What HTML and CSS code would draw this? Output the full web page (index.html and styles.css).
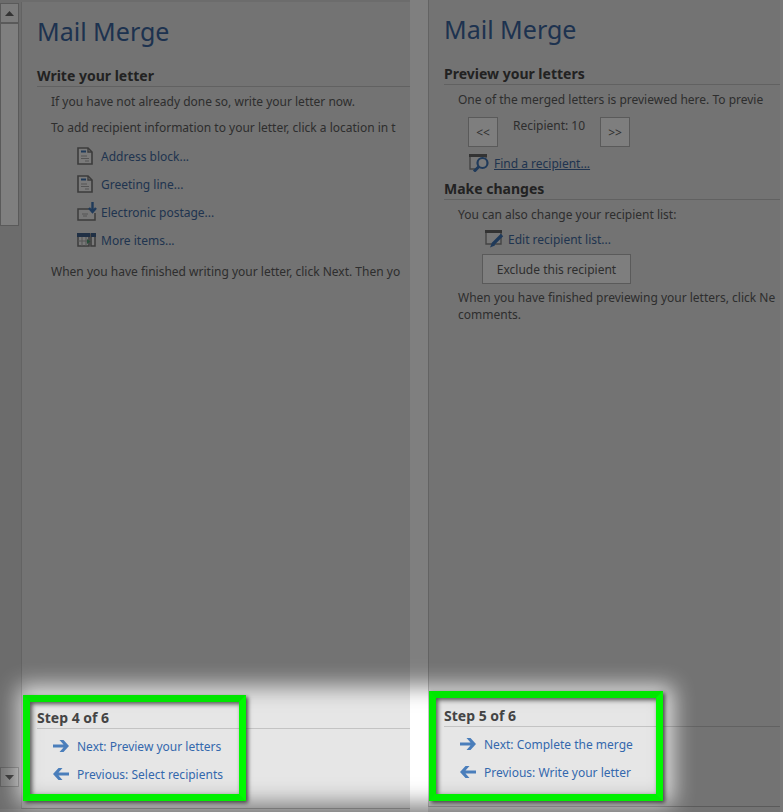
FILE: index.html
```html
<!DOCTYPE html>
<html lang="en">
<head>
<meta charset="utf-8">
<title>Mail Merge</title>
<link rel="stylesheet" href="styles.css">
</head>
<body>
<svg class="defs" width="0" height="0" aria-hidden="true">
  <symbol id="doc" viewBox="0 0 16 18">
    <path d="M1 1h10l4 4v12H1z" fill="#f4f4f4" stroke="#777" stroke-width="1.600"/>
    <path d="M11 1v4h4" fill="none" stroke="#777" stroke-width="1.400"/>
    <path d="M4 4.500h5" stroke="#3f74b5" stroke-width="2"/>
    <path d="M4 9h6M4 11.500h8M8 14h4" stroke="#aaa" stroke-width="1.200"/>
  </symbol>
  <symbol id="postage" viewBox="0 0 20 20">
    <path d="M12 7H1v11h17v-7" fill="#efefef" stroke="#777" stroke-width="1.500"/>
    <path d="M5 12h6M6 14h4" stroke="#aaa" stroke-width="1.200"/>
    <path d="M15.500 0v9M12 6l3.500 4L19 6" fill="none" stroke="#3f74b5" stroke-width="2.400"/>
  </symbol>
  <symbol id="items" viewBox="0 0 20 14">
    <path d="M1 1h11v12H1zM14 1h4v12h-4z" fill="#f0f0f0" stroke="#777" stroke-width="1.500"/>
    <path d="M0 0h13v4H0zM14 0h5v4h-5z" fill="#41618a"/>
    <path d="M1 8h11M5 4v9M9 4v9" stroke="#aaa"/>
    <path d="M10 6l3.500 2.500-3.500 2.500z" fill="#4f9b73"/>
  </symbol>
  <symbol id="find" viewBox="0 0 20 18">
    <path d="M7 15H1V2h16v2" fill="#efefef" stroke="#888" stroke-width="1.400"/>
    <path d="M0 0h18v3H0z" fill="#666"/>
    <circle cx="13.500" cy="9" r="5" fill="#f2f2f2" stroke="#3f74b5" stroke-width="2.200"/>
    <path d="M10 12.500l-5 5" stroke="#3f74b5" stroke-width="3"/>
  </symbol>
  <symbol id="edit" viewBox="0 0 20 18">
    <path d="M1 1h15v13H1z" fill="#efefef" stroke="#888" stroke-width="1.400"/>
    <path d="M0 0h17v3H0z" fill="#666"/>
    <path d="M17 5L8 14" stroke="#3f74b5" stroke-width="3.400"/>
    <path d="M7 12.500l3 3-5 2z" fill="#3f74b5"/>
  </symbol>
  <symbol id="arrow" viewBox="0 0 16 12">
    <path d="M0 4.500h10.500L6.500 0h4L16 6l-5.500 6h-4l4-4.500H0z" fill="#4a7ebb"/>
  </symbol>
</svg>

<main class="panes">
  <section class="pane pane-write">
    <div class="scrollbar">
      <button class="scroll-btn" type="button" aria-label="Scroll up"><svg width="9" height="5" viewBox="0 0 9 5"><path d="M0 5L4.500 0 9 5z"/></svg></button>
      <div class="thumb"></div>
      <button class="scroll-btn down" type="button" aria-label="Scroll down"><svg width="9" height="5" viewBox="0 0 9 5"><path d="M0 0h9L4.500 5z"/></svg></button>
    </div>
    <div class="content">
      <h1>Mail Merge</h1>
      <h2>Write your letter</h2>
      <p>If you have not already done so, write your letter now.</p>
      <p class="spaced">To add recipient information to your letter, click a location in t</p>
      <ul class="links">
        <li><svg class="icon-doc"><use href="#doc"/></svg><a href="#address">Address block...</a></li>
        <li><svg class="icon-doc"><use href="#doc"/></svg><a href="#greeting">Greeting line...</a></li>
        <li><svg class="icon-postage"><use href="#postage"/></svg><a href="#postage-link">Electronic postage...</a></li>
        <li><svg class="icon-items"><use href="#items"/></svg><a href="#more">More items...</a></li>
      </ul>
      <p class="spaced">When you have finished writing your letter, click Next. Then yo</p>
      <nav class="steps" aria-label="Step 4">
        <h2>Step 4 of 6</h2>
        <a href="#next"><svg class="arrow"><use href="#arrow"/></svg>Next: Preview your letters</a>
        <a href="#previous"><svg class="arrow back"><use href="#arrow"/></svg>Previous: Select recipients</a>
        <div class="frame"></div>
      </nav>
    </div>
  </section>

  <section class="pane pane-preview">
    <div class="content">
      <h1>Mail Merge</h1>
      <h2>Preview your letters</h2>
      <p>One of the merged letters is previewed here. To previe</p>
      <div class="pager">
        <button class="btn square" type="button">&lt;&lt;</button>
        <span>Recipient: 10</span>
        <button class="btn square" type="button">&gt;&gt;</button>
      </div>
      <div class="action find"><svg class="icon-find"><use href="#find"/></svg><a href="#find-link">Find a recipient...</a></div>
      <h2 class="second">Make changes</h2>
      <p>You can also change your recipient list:</p>
      <div class="action edit"><svg class="icon-find"><use href="#edit"/></svg><a href="#edit-link">Edit recipient list...</a></div>
      <button class="btn wide" type="button">Exclude this recipient</button>
      <p class="after-button">When you have finished previewing your letters, click Ne<br>comments.</p>
      <nav class="steps" aria-label="Step 5">
        <h2>Step 5 of 6</h2>
        <a href="#next"><svg class="arrow"><use href="#arrow"/></svg>Next: Complete the merge</a>
        <a href="#previous"><svg class="arrow back"><use href="#arrow"/></svg>Previous: Write your letter</a>
        <div class="frame"></div>
      </nav>
    </div>
  </section>
</main>

<svg class="dim" aria-hidden="true">
  <filter id="soft" x="-20%" y="-50%" width="140%" height="200%"><feGaussianBlur stdDeviation="11"/></filter>
  <mask id="spot" maskUnits="userSpaceOnUse" x="0" y="0" width="100%" height="100%">
    <rect width="100%" height="100%" fill="#fff"/>
    <rect class="hole" filter="url(#soft)"/>
  </mask>
  <rect width="100%" height="100%" fill-opacity="0.5" mask="url(#spot)"/>
</svg>
</body>
</html>
```
FILE: styles.css
```css
* { box-sizing: border-box; }

body {
  margin: 0;
  position: relative;
  background: #fff;
  color: #444;
  font: 12px/17px "Noto Sans", "Open Sans", sans-serif;
}

.defs { position: absolute; }

.panes {
  display: grid;
  grid-template-columns: minmax(0, 410fr) minmax(0, 355fr);
  column-gap: 18px;
  min-height: 100vh;
}

.pane {
  display: flex;
  background: #e6e6e6;
}

.pane-write {
  border-top: 2px solid #d8d8d8;
  padding-bottom: 3px;
}

.pane-preview {
  border-right: 3px solid #f2f2f2;
  padding-bottom: 5px;
}

.scrollbar {
  flex: none;
  width: 21px;
  padding: 1px 2px 22px 0;
  display: flex;
  flex-direction: column;
  background: #d8d8d8;
}

.scroll-btn {
  width: 19px;
  height: 20px;
  padding: 0;
  display: flex;
  align-items: center;
  justify-content: center;
  background: #f8f8f8;
  border: 1px solid #b4b4b4;
  fill: #666;
}

.scroll-btn.down {
  margin-top: auto;
  background: #e4e4e4;
}

.thumb {
  width: 19px;
  height: 203px;
  background: #fff;
  border: 1px solid #b4b4b4;
}

.content {
  flex: 1;
  min-width: 0;
  display: flex;
  flex-direction: column;
  padding: 11px 0 0 15px;
  border-left: 1px solid #c6c6c6;
  border-bottom: 1px solid #b4b4b4;
  white-space: nowrap;
  overflow: hidden;
}

h1 {
  margin: 0 0 17px;
  font-size: 25px;
  font-weight: 400;
  line-height: 36px;
  color: #3a659f;
}

h2 {
  margin: 0 0 6px;
  font-size: 14px;
  font-weight: 700;
  line-height: 20px;
  border-bottom: 1px solid #c3c3c3;
}

h2.second { margin-top: 6px; }

p {
  margin: 0 0 0 14px;
  color: #5c5c5c;
}

p.spaced { margin-top: 9px; }

p.after-button { margin-top: 5px; }

a {
  color: #41699f;
  text-decoration: none;
}

.links {
  list-style: none;
  margin: 6px 0 0 40px;
  padding: 0;
}

.links li {
  display: flex;
  align-items: center;
  height: 28px;
}

.links svg {
  flex: none;
}

.icon-doc { width: 16px; height: 18px; margin-right: 8px; }
.icon-postage { width: 20px; height: 20px; margin-right: 4px; }
.icon-items { width: 20px; height: 14px; margin-right: 4px; }
.icon-find { width: 20px; height: 18px; }

.pager {
  display: flex;
  margin: 9px 0 0 24px;
  color: #5c5c5c;
}

.pager span {
  width: 102px;
  text-align: center;
}

.btn {
  height: 30px;
  padding: 0;
  font: inherit;
  color: #5c5c5c;
  background: #fdfdfd;
  border: 1px solid #b4b4b4;
}

.btn.square { width: 30px; }

.btn.wide {
  width: 149px;
  margin: 5px 0 0 38px;
}

.action {
  display: flex;
  align-items: center;
  height: 20px;
}

.find {
  gap: 5px;
  margin: 6px 0 0 25px;
}

.find a { text-decoration: underline; }

.edit {
  gap: 3px;
  margin: 6px 0 0 41px;
}

.steps {
  position: relative;
  margin-top: auto;
  padding-bottom: 20px;
}

.steps h2 { margin-bottom: 3px; }

.steps a {
  display: flex;
  align-items: center;
  gap: 8px;
  height: 28px;
  margin-left: 16px;
  color: #3468ad;
}

.arrow { width: 16px; height: 12px; }
.back { transform: scaleX(-1); }

/* Highlight frames and dimming layer lie over the panes */
.frame {
  position: absolute;
  z-index: 2;
  left: -14px;
  top: -13px;
  width: 223px;
  height: 106px;
  border: 7px solid;
  border-color: #00e600 #00fa00 #00f000 #00ec00;
  box-shadow: 2px 2px 4px #444, inset 2px 2px 4px #555;
  pointer-events: none;
}

.pane-preview .frame {
  left: -15px;
  top: -15px;
  width: 234px;
  height: 110px;
}

.dim {
  position: absolute;
  z-index: 1;
  inset: 0;
  width: 100%;
  height: 100%;
  pointer-events: none;
}

.hole {
  x: 18px;
  y: calc(100% - 126px);
  width: calc(54% + 232px);
  height: 118px;
}
```
